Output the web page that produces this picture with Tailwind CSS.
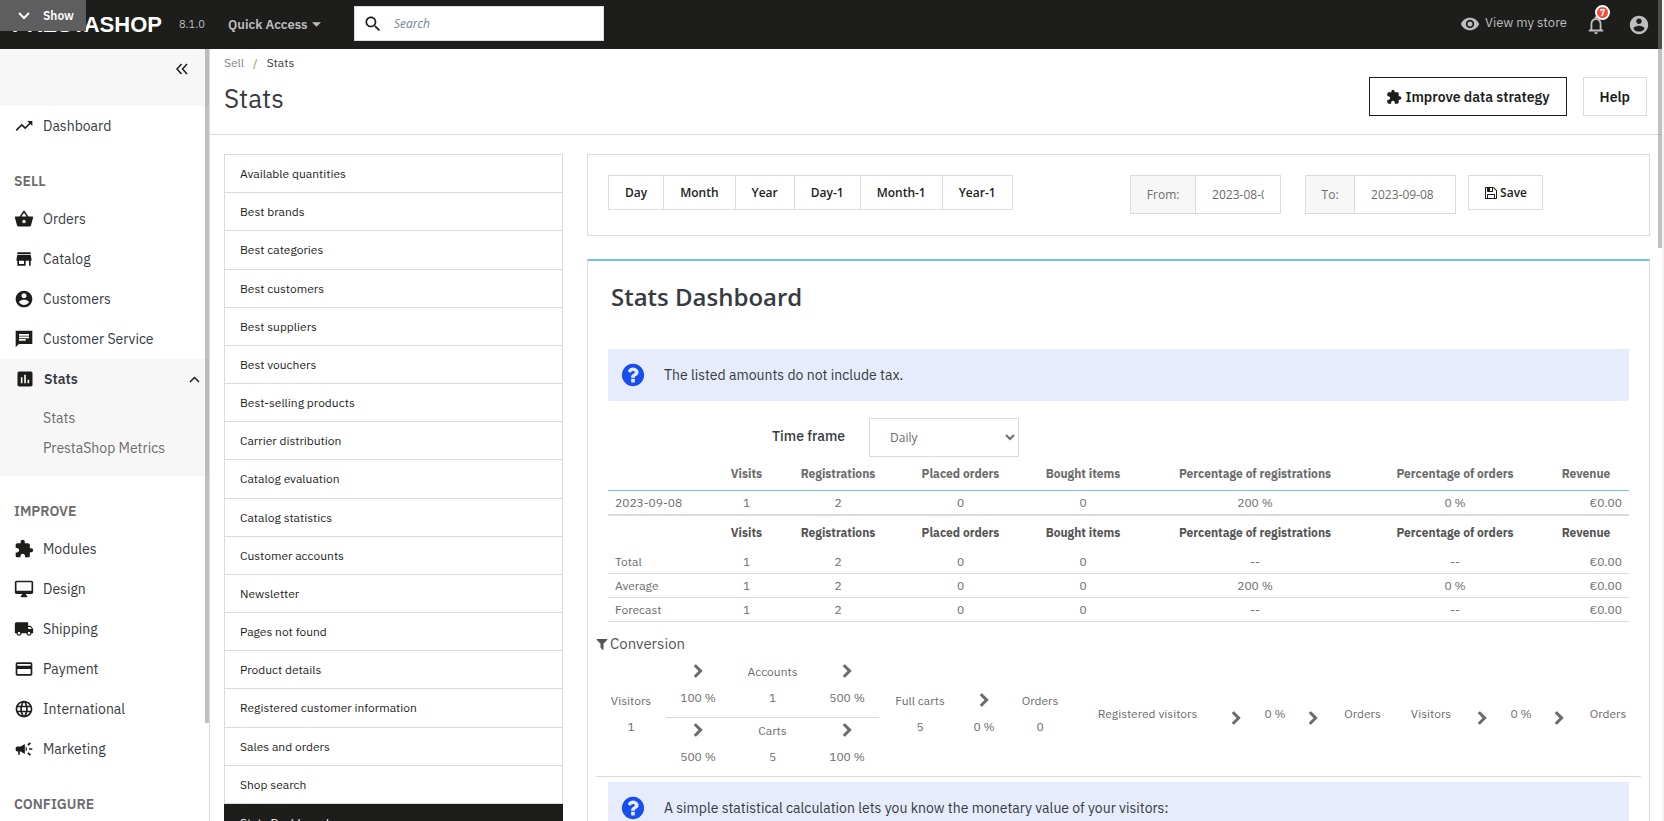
<!DOCTYPE html>
<html lang="en">
<head>
  <meta charset="UTF-8" />
  <meta name="viewport" content="width=device-width, initial-scale=1.0"/>
  <title>Stats • PrestaShop</title>
  <script src="https://cdn.jsdelivr.net/npm/@tailwindcss/browser@4"></script>
</head>
<body class="h-screen overflow-hidden flex flex-col bg-white text-[#6c6c6c] text-xs font-['IBM_Plex_Sans','Liberation_Sans',sans-serif]">

  <!-- Shared icons -->
  <svg class="hidden">
    <symbol id="chevron" viewBox="0 0 1792 1792"><path d="M1363 877l-742 742q-19 19-45 19t-45-19l-166-166q-19-19-19-45t19-45l531-531-531-531q-19-19-19-45t19-45l166-166q19-19 45-19t45 19l742 742q19 19 19 45t-19 45z"/></symbol>
    <symbol id="question" viewBox="0 0 1792 1792"><path d="M1024 1376v-192q0-14-9-23t-23-9h-192q-14 0-23 9t-9 23v192q0 14 9 23t23 9h192q14 0 23-9t9-23zm256-672q0-88-55.5-163t-138.5-116-170-41q-243 0-371 213-15 24 8 42l132 100q7 6 19 6 16 0 25-12 53-68 86-92 34-24 86-24 48 0 85.5 26t37.5 59q0 38-20 61t-68 45q-63 28-115.5 86.5t-52.5 125.5v36q0 14 9 23t23 9h192q14 0 23-9t9-23q0-19 21.5-49.5t54.5-49.5q32-18 49-28.5t46-35 44.5-48 28-60.5 12.5-81zm384 192q0 209-103 385.5t-279.5 279.5-385.5 103-385.5-103-279.5-279.5-103-385.5 103-385.5 279.5-279.5 385.5-103 385.5 103 279.5 279.5 103 385.5z"/></symbol>
    <symbol id="account" viewBox="0 0 24 24"><path d="M12 2C6.48 2 2 6.48 2 12s4.48 10 10 10 10-4.48 10-10S17.52 2 12 2zm0 3c1.66 0 3 1.34 3 3s-1.34 3-3 3-3-1.34-3-3 1.34-3 3-3zm0 14.2c-2.5 0-4.71-1.28-6-3.22.03-1.99 4-3.08 6-3.08 1.99 0 5.97 1.09 6 3.08-1.29 1.94-3.5 3.22-6 3.22z"/></symbol>
    <symbol id="extension" viewBox="0 0 24 24"><path d="M20.5 11H19V7c0-1.1-.9-2-2-2h-4V3.5C13 2.12 11.88 1 10.5 1S8 2.12 8 3.5V5H4c-1.1 0-1.99.9-1.99 2v3.8H3.5c1.49 0 2.7 1.21 2.7 2.7s-1.21 2.7-2.7 2.7H2V20c0 1.1.9 2 2 2h3.8v-1.5c0-1.49 1.21-2.7 2.7-2.7 1.49 0 2.7 1.21 2.7 2.7V22H17c1.1 0 2-.9 2-2v-4h1.5c1.38 0 2.5-1.12 2.5-2.5S21.88 11 20.5 11z"/></symbol>
  </svg>

  <!-- Header -->
  <header class="relative h-[49px] shrink-0 bg-[#1d1d1b] text-[#bebebe] flex items-center pl-3 pr-[14px]">
    <a href="#" class="w-[167px] text-white text-[22px] leading-6 font-bold font-['Liberation_Sans',sans-serif]">PRESTASHOP</a>
    <span class="w-[49px] text-[11px]">8.1.0</span>
    <button class="w-[126px] flex items-center gap-1 text-[13px] font-semibold">Quick Access
      <svg class="w-[9px] h-[5px] fill-current" viewBox="0 0 8 4"><path d="M0 0h8L4 4z"/></svg>
    </button>
    <form class="w-[250px] h-[35px] mb-[2px] bg-white border border-[#dbdbdb] flex items-center">
      <button type="button" aria-label="Search" class="w-[39px] pl-[8px]">
        <svg class="size-5 fill-[#1d1d1b]" viewBox="0 0 24 24"><path d="M15.5 14h-.79l-.28-.27C15.41 12.59 16 11.11 16 9.5 16 5.91 13.09 3 9.5 3S3 5.91 3 9.5 5.91 16 9.5 16c1.61 0 3.09-.59 4.23-1.57l.27.28v.79l5 4.99L20.49 19l-4.99-5zm-6 0C7.01 14 5 11.99 5 9.5S7.01 5 9.5 5 14 7.01 14 9.5 11.99 14 9.5 14z"/></svg>
      </button>
      <input type="text" aria-label="Search" placeholder="Search" class="grow min-w-0 outline-none text-xs italic placeholder:text-[#6c868e] font-['Open_Sans',sans-serif]"/>
    </form>

    <div class="ml-auto flex items-center">
      <a href="#" class="flex items-center gap-[5px] text-[13px]">
        <svg class="size-5 fill-current" viewBox="0 0 24 24"><path d="M12 4.500C7 4.500 2.730 7.610 1 12c1.730 4.390 6 7.500 11 7.500s9.270-3.110 11-7.500c-1.730-4.390-6-7.500-11-7.500zM12 17c-2.760 0-5-2.240-5-5s2.240-5 5-5 5 2.240 5 5-2.240 5-5 5zm0-8c-1.660 0-3 1.340-3 3s1.340 3 3 3 3-1.340 3-3-1.340-3-3-3z"/></svg>
        <span class="pb-[3px]">View my store</span>
      </a>
      <button aria-label="Notifications" class="relative ml-[18px]">
        <svg class="size-[22px] fill-current" viewBox="0 0 24 24"><path d="M12 22c1.1 0 2-.9 2-2h-4c0 1.1.89 2 2 2zm6-6v-5c0-3.07-1.64-5.64-4.5-6.32V4c0-.83-.67-1.500-1.500-1.500s-1.500.67-1.500 1.500v.68C7.630 5.360 6 7.920 6 11v5l-2 2v1h16v-1l-2-2zm-2 1H8v-6c0-2.480 1.510-4.500 4-4.500s4 2.020 4 4.500v6z"/></svg>
        <span class="absolute -top-[9px] left-[10px] size-[15px] rounded-full border-2 border-white bg-[#f54c3e] text-white text-[9px] leading-[11px] font-bold text-center">7</span>
      </button>
      <button aria-label="Account" class="ml-[21px]">
        <svg class="size-[22px] fill-current"><use href="#account"/></svg>
      </button>
    </div>

    <!-- Toolbar toggle -->
    <button class="absolute top-0 left-0 w-[86px] h-[31px] bg-[#5e5e5e] text-white text-xs font-semibold flex items-center gap-[13px] pl-[18px]">
      <svg class="w-3 h-2" viewBox="0 0 12 8" fill="none" stroke="white" stroke-width="2"><path d="M1 1l5 5 5-5"/></svg>
      Show
    </button>
  </header>

  <div class="grow min-h-0 flex">

    <!-- Sidebar -->
    <nav class="relative w-[210px] shrink-0 border-r border-[#dbdbdb] overflow-hidden text-sm text-[#363a41] fill-[#1d1d1b]">
      <div class="h-[57px] bg-[#f7f7f7] flex justify-end items-start pt-[14px] pr-[21px]">
        <button aria-label="Collapse menu">
          <svg class="w-3 h-3" viewBox="0 0 12 12" fill="none" stroke="#1d1d1b" stroke-width="1.500"><path d="M5.500 1L1 6l4.500 5M11 1L6.500 6l4.500 5"/></svg>
        </button>
      </div>
      <a href="#" class="h-10 flex items-center gap-[9px] pl-[14px]">
        <svg class="size-5" viewBox="0 0 24 24"><path d="M16 6l2.290 2.290-4.880 4.880-4-4L2 16.590 3.410 18l6-6 4 4 6.300-6.290L22 12V6z"/></svg>Dashboard</a>

      <h2 class="h-[53px] pt-[26px] pl-[14px] leading-[18px] font-semibold text-[#6c6c6c]">SELL</h2>
      <a href="#" class="h-10 flex items-center gap-[9px] pl-[14px]">
        <svg class="size-5" viewBox="0 0 24 24"><path d="M17.210 9l-4.380-6.560c-.19-.28-.51-.42-.83-.42-.32 0-.64.14-.83.43L6.790 9H2c-.55 0-1 .45-1 1 0 .09.01.18.04.27l2.540 9.270c.23.84 1 1.460 1.920 1.460h13c.92 0 1.690-.62 1.930-1.460l2.540-9.270L23 10c0-.55-.45-1-1-1h-4.790zM9 9l3-4.400L15 9H9zm3 8c-1.100 0-2-.9-2-2s.9-2 2-2 2 .9 2 2-.9 2-2 2z"/></svg>Orders</a>
      <a href="#" class="h-10 flex items-center gap-[9px] pl-[14px]">
        <svg class="size-5" viewBox="0 0 24 24"><path d="M20 4H4v2h16V4zm1 10v-2l-1-5H4l-1 5v2h1v6h10v-6h4v6h2v-6h1zm-9 4H6v-4h6v4z"/></svg>Catalog</a>
      <a href="#" class="h-10 flex items-center gap-[9px] pl-[14px]">
        <svg class="size-5"><use href="#account"/></svg>Customers</a>
      <a href="#" class="h-10 flex items-center gap-[9px] pl-[14px]">
        <svg class="size-5" viewBox="0 0 24 24"><path d="M22 2H2v20l4-4h16zM6 9h12v2H6V9zm8 5H6v-2h8v2zm4-6H6V6h12v2z"/></svg>Customer Service</a>

      <div class="bg-[#f7f7f7] pb-[13px]">
        <a href="#" class="h-10 flex items-center gap-[9px] pl-[15px] font-semibold">
          <svg class="size-5" viewBox="0 0 24 24"><path d="M19 3H5c-1.100 0-2 .9-2 2v14c0 1.100.9 2 2 2h14c1.100 0 2-.9 2-2V5c0-1.100-.9-2-2-2zM9 17H7v-7h2v7zm4 0h-2V7h2v10zm4 0h-2v-4h2v4z"/></svg>Stats
          <svg class="w-[11px] h-[7px] ml-auto mr-[9px]" viewBox="0 0 11 7" fill="none" stroke="#1d1d1b" stroke-width="1.500"><path d="M1 6l4.500-4.500L10 6"/></svg>
        </a>
        <ul class="pt-1 text-[#6c6c6c]">
          <li><a href="#" class="h-[30px] flex items-center pl-[43px]">Stats</a></li>
          <li><a href="#" class="h-[30px] flex items-center pl-[43px]">PrestaShop Metrics</a></li>
        </ul>
      </div>

      <h2 class="h-[53px] pt-[26px] pl-[14px] leading-[18px] font-semibold text-[#6c6c6c]">IMPROVE</h2>
      <a href="#" class="h-10 flex items-center gap-[9px] pl-[14px]">
        <svg class="size-5"><use href="#extension"/></svg>Modules</a>
      <a href="#" class="h-10 flex items-center gap-[9px] pl-[14px]">
        <svg class="size-5" viewBox="0 0 24 24"><path d="M21 2H3c-1.100 0-2 .9-2 2v12c0 1.100.9 2 2 2h7l-2 3v1h8v-1l-2-3h7c1.100 0 2-.9 2-2V4c0-1.100-.9-2-2-2zm0 12H3V4h18v10z"/></svg>Design</a>
      <a href="#" class="h-10 flex items-center gap-[9px] pl-[14px]">
        <svg class="size-5" viewBox="0 0 24 24"><path d="M20 8h-3V4H3c-1.100 0-2 .9-2 2v11h2c0 1.660 1.340 3 3 3s3-1.340 3-3h6c0 1.660 1.340 3 3 3s3-1.340 3-3h2v-5l-3-4zM6 18.500c-.83 0-1.500-.67-1.500-1.500s.67-1.500 1.500-1.500 1.500.67 1.500 1.500-.67 1.500-1.500 1.500zm13.500-9l1.960 2.500H17V9.500h2.500zm-1.500 9c-.83 0-1.500-.67-1.500-1.500s.67-1.500 1.500-1.500 1.500.67 1.500 1.500-.67 1.500-1.500 1.500z"/></svg>Shipping</a>
      <a href="#" class="h-10 flex items-center gap-[9px] pl-[14px]">
        <svg class="size-5" viewBox="0 0 24 24"><path d="M20 4H4c-1.110 0-1.990.89-1.990 2L2 18c0 1.110.89 2 2 2h16c1.110 0 2-.89 2-2V6c0-1.110-.89-2-2-2zm0 14H4v-6h16v6zm0-10H4V6h16v2z"/></svg>Payment</a>
      <a href="#" class="h-10 flex items-center gap-[9px] pl-[14px]">
        <svg class="size-5" viewBox="0 0 24 24"><path d="M11.990 2C6.470 2 2 6.480 2 12s4.470 10 9.990 10C17.520 22 22 17.520 22 12S17.520 2 11.990 2zm6.930 6h-2.950c-.32-1.250-.78-2.450-1.380-3.560 1.840.63 3.370 1.910 4.330 3.560zM12 4.040c.83 1.200 1.480 2.530 1.910 3.960h-3.820c.43-1.430 1.080-2.760 1.910-3.960zM4.260 14C4.100 13.360 4 12.690 4 12s.1-1.360.26-2h3.380c-.08.66-.14 1.320-.14 2 0 .68.06 1.340.14 2H4.260zm.82 2h2.950c.32 1.250.78 2.450 1.380 3.560-1.840-.63-3.370-1.900-4.330-3.560zm2.950-8H5.080c.96-1.660 2.490-2.930 4.330-3.560C8.810 5.550 8.350 6.750 8.030 8zM12 19.960c-.83-1.200-1.480-2.530-1.910-3.960h3.820c-.43 1.430-1.080 2.760-1.910 3.960zM14.340 14H9.660c-.09-.66-.16-1.320-.16-2 0-.68.07-1.350.16-2h4.680c.09.65.16 1.320.16 2 0 .68-.07 1.340-.16 2zm.25 5.560c.6-1.110 1.060-2.310 1.380-3.560h2.950c-.96 1.650-2.490 2.930-4.330 3.560zM16.360 14c.08-.66.14-1.320.14-2 0-.68-.06-1.340-.14-2h3.380c.16.64.26 1.310.26 2s-.1 1.360-.26 2h-3.380z"/></svg>International</a>
      <a href="#" class="h-10 flex items-center gap-[9px] pl-[14px]">
        <svg class="size-5" viewBox="0 0 24 24"><path d="M18 11v2h4v-2h-4zm-2 6.610c.96.71 2.210 1.650 3.200 2.390.4-.53.8-1.070 1.200-1.600-.99-.74-2.240-1.680-3.200-2.400-.4.54-.8 1.080-1.200 1.610zM20.400 5.600c-.4-.53-.8-1.070-1.200-1.600-.99.74-2.240 1.680-3.200 2.400.4.53.8 1.070 1.200 1.600.96-.72 2.210-1.650 3.200-2.400zM4 9c-1.100 0-2 .9-2 2v2c0 1.100.9 2 2 2h1v4h2v-4h1l5 3V6L8 9H4zm11.500 3c0-1.330-.58-2.530-1.500-3.350v6.690c.92-.81 1.500-2.010 1.500-3.340z"/></svg>Marketing</a>

      <h2 class="h-[53px] pt-[26px] pl-[14px] leading-[18px] font-semibold text-[#6c6c6c]">CONFIGURE</h2>

      <!-- Scroll thumb -->
      <div class="absolute top-0 right-0 w-1 h-[674px] bg-[#828282]/50"></div>
    </nav>

    <main class="grow min-w-0 overflow-hidden">

      <!-- Page head -->
      <div class="h-[86px] border-b border-[#dbdbdb] pl-[14px] pr-[17px] pt-[5px] flex justify-between">
        <div>
          <nav class="flex leading-[18px] text-xs">
            <a href="#" class="text-[#7f8689]">Sell</a>
            <span class="mx-[9px] text-[#7c9c5c]">/</span>
            <a href="#" class="text-[#363a41]">Stats</a>
          </nav>
          <h1 class="mt-[10px] text-[26px] leading-8 text-[#363a41]">Stats</h1>
        </div>
        <div class="flex gap-4 pt-[23px] text-sm font-semibold text-[#1d1d1b]">
          <a href="#" class="h-[39px] border border-[#1d1d1b] px-4 flex items-center gap-1">
            <svg class="size-4 fill-current"><use href="#extension"/></svg>Improve data strategy</a>
          <a href="#" class="h-[39px] border border-[#dbdbdb] px-4 flex items-center">Help</a>
        </div>
      </div>

      <div class="flex items-start gap-6 pt-[19px] pl-[14px] pr-[14px]">

        <!-- Stats modules -->
        <div class="w-[339px] min-h-[688px] shrink-0 border border-[#dbdbdb] flex flex-col divide-y divide-[#dbdbdb] text-[#1d1d1b]">
          <a href="#" class="grow flex items-center px-[15px] pt-px">Available quantities</a>
          <a href="#" class="grow flex items-center px-[15px] pt-px">Best brands</a>
          <a href="#" class="grow flex items-center px-[15px] pt-px">Best categories</a>
          <a href="#" class="grow flex items-center px-[15px] pt-px">Best customers</a>
          <a href="#" class="grow flex items-center px-[15px] pt-px">Best suppliers</a>
          <a href="#" class="grow flex items-center px-[15px] pt-px">Best vouchers</a>
          <a href="#" class="grow flex items-center px-[15px] pt-px">Best-selling products</a>
          <a href="#" class="grow flex items-center px-[15px] pt-px">Carrier distribution</a>
          <a href="#" class="grow flex items-center px-[15px] pt-px">Catalog evaluation</a>
          <a href="#" class="grow flex items-center px-[15px] pt-px">Catalog statistics</a>
          <a href="#" class="grow flex items-center px-[15px] pt-px">Customer accounts</a>
          <a href="#" class="grow flex items-center px-[15px] pt-px">Newsletter</a>
          <a href="#" class="grow flex items-center px-[15px] pt-px">Pages not found</a>
          <a href="#" class="grow flex items-center px-[15px] pt-px">Product details</a>
          <a href="#" class="grow flex items-center px-[15px] pt-px">Registered customer information</a>
          <a href="#" class="grow flex items-center px-[15px] pt-px">Sales and orders</a>
          <a href="#" class="grow flex items-center px-[15px] pt-px">Shop search</a>
          <a href="#" class="grow flex items-center px-4 pt-px -mx-px bg-[#1d1d1b] text-white">Stats Dashboard</a>
        </div>

        <div class="grow min-w-0">

          <!-- Date range -->
          <section class="h-[82px] border border-[#dbdbdb] pt-5 px-5 flex items-start font-['Open_Sans',sans-serif]">
            <div class="h-[35px] flex border border-[#dbdbdb] divide-x divide-[#dbdbdb] font-semibold text-[#1d1d1b]">
              <button class="px-4">Day</button>
              <button class="px-4">Month</button>
              <button class="px-4">Year</button>
              <button class="px-4">Day-1</button>
              <button class="px-4">Month-1</button>
              <button class="px-4">Year-1</button>
            </div>
            <form class="ml-auto mr-[86px] flex items-start">
              <div class="h-[39px] flex border border-[#dbdbdb]">
                <label for="dateFrom" class="w-[65px] flex items-center justify-center bg-[#f7f7f7] border-r border-[#dbdbdb]">From:</label>
                <input id="dateFrom" type="text" value="2023-08-08" class="w-[84px] px-4"/>
              </div>
              <div class="h-[39px] ml-6 flex border border-[#dbdbdb]">
                <label for="dateTo" class="w-[49px] flex items-center justify-center bg-[#f7f7f7] border-r border-[#dbdbdb]">To:</label>
                <input id="dateTo" type="text" value="2023-09-08" class="w-[100px] px-4"/>
              </div>
              <button type="button" class="h-[35px] ml-3 px-[15px] flex items-center gap-[2px] border border-[#dbdbdb] font-semibold text-[#1d1d1b]">
                <svg class="size-[14px] fill-current" viewBox="0 0 1792 1792"><path d="M512 1536h768v-384h-768v384zm896 0h128v-896q0-14-10-38.500t-20-34.500l-281-281q-10-10-34-20t-39-10v416q0 40-28 68t-68 28h-576q-40 0-68-28t-28-68v-416h-128v1280h128v-416q0-40 28-68t68-28h832q40 0 68 28t28 68v416zm-384-928v-320q0-13-9.500-22.500t-22.500-9.500h-192q-13 0-22.500 9.500t-9.500 22.500v320q0 13 9.500 22.500t22.500 9.500h192q13 0 22.500-9.500t9.500-22.500zm640 32v928q0 40-28 68t-68 28h-1344q-40 0-68-28t-28-68v-1344q0-40 28-68t68-28h928q40 0 88 20t76 48l280 280q28 28 48 76t20 88z"/></svg>
                Save
              </button>
            </form>
          </section>

          <!-- Stats dashboard -->
          <section class="mt-[23px] border border-t-2 border-[#dbdbdb] border-t-[#76c5d6]">
            <h3 class="pt-5 pl-[23px] h-[88px] text-2xl leading-8 font-semibold text-[#363a41] font-['Open_Sans',sans-serif]">Stats Dashboard</h3>

            <div class="mx-5 h-[52px] bg-[#e6ecfc] flex items-center gap-[18px] pl-3 text-sm text-[#363a41]">
              <svg class="size-[26px] fill-[#174eef]"><use href="#question"/></svg>
              The listed amounts do not include tax.
            </div>

            <div class="mt-[17px] ml-[184px] flex items-center gap-6">
              <label for="granularity" class="w-[73px] pb-[3px] text-sm font-medium whitespace-nowrap text-[#363a41]">Time frame</label>
              <select id="granularity" class="w-[150px] h-[39px] pl-4 bg-white border border-[#dbdbdb] text-[#6c6c6c] font-['Open_Sans',sans-serif]">
                <option>Daily</option>
                <option>Weekly</option>
                <option>Monthly</option>
                <option>Yearly</option>
              </select>
            </div>

            <div class="px-5">
              <table class="w-full table-fixed border-separate border-spacing-0 text-center leading-4">
                <colgroup>
                  <col class="w-[107px]"/><col class="w-[63px]"/><col class="w-[120px]"/><col class="w-[125px]"/>
                  <col class="w-[120px]"/><col class="w-[224px]"/><col class="w-[176px]"/><col class="w-[86px]"/>
                </colgroup>
                <thead>
                  <tr class="h-[34px] *:border-b *:border-[#76c5d6]">
                    <th></th><th>Visits</th><th>Registrations</th><th>Placed orders</th><th>Bought items</th><th>Percentage of registrations</th><th>Percentage of orders</th><th>Revenue</th>
                  </tr>
                </thead>
                <tbody>
                  <tr class="h-[25px] *:border-b-2 *:border-[#dbdbdb]">
                    <td class="text-left pl-[7px]">2023-09-08</td><td>1</td><td>2</td><td>0</td><td>0</td><td>200 %</td><td>0 %</td><td class="text-right pr-[7px]">€0.00</td>
                  </tr>
                  <tr class="h-[34px] text-[#555]">
                    <th></th><th>Visits</th><th>Registrations</th><th>Placed orders</th><th>Bought items</th><th>Percentage of registrations</th><th>Percentage of orders</th><th>Revenue</th>
                  </tr>
                  <tr class="h-6 *:border-b *:border-[#dbdbdb]">
                    <td class="text-left pl-[7px]">Total</td><td>1</td><td>2</td><td>0</td><td>0</td><td>--</td><td>--</td><td class="text-right pr-[7px]">€0.00</td>
                  </tr>
                  <tr class="h-6 *:border-b *:border-[#dbdbdb]">
                    <td class="text-left pl-[7px]">Average</td><td>1</td><td>2</td><td>0</td><td>0</td><td>200 %</td><td>0 %</td><td class="text-right pr-[7px]">€0.00</td>
                  </tr>
                  <tr class="h-6 *:border-b *:border-[#dbdbdb]">
                    <td class="text-left pl-[7px]">Forecast</td><td>1</td><td>2</td><td>0</td><td>0</td><td>--</td><td>--</td><td class="text-right pr-[7px]">€0.00</td>
                  </tr>
                </tbody>
              </table>
            </div>

            <!-- Conversion -->
            <div class="mx-2 border-b border-[#dbdbdb]">
              <h4 class="pt-3 flex items-center text-[15px] leading-5 text-[#555]">
                <svg class="size-[14px] fill-current" viewBox="128 0 1792 1792"><path d="M1595 295q17 41-14 70l-493 493v742q0 42-39 59-13 5-25 5-27 0-45-19l-256-256q-19-19-19-45v-486l-493-493q-31-29-14-70 17-39 59-39h1280q42 0 59 39z"/></svg>
                Conversion
              </h4>
              <div class="h-[122px] pb-[2px] grid grid-cols-[70fr_213fr_82fr_46fr_66fr_149fr_29fr_48fr_29fr_69fr_68fr_34fr_44fr_32fr_66fr] items-center justify-items-center whitespace-nowrap leading-[26px] text-center fill-[#6c6c6c]">
                <div>Visitors<br>1</div>
                <div class="w-full divide-y divide-[#dbdbdb]">
                  <div class="h-16 pt-[5px] grid grid-cols-[64fr_85fr_64fr]">
                    <div><svg class="size-[15px] mx-auto mt-[5px] mb-[6px]"><use href="#chevron"/></svg>100 %</div>
                    <div>Accounts<br>1</div>
                    <div><svg class="size-[15px] mx-auto mt-[5px] mb-[6px]"><use href="#chevron"/></svg>500 %</div>
                  </div>
                  <div class="h-14 grid grid-cols-[64fr_85fr_64fr]">
                    <div><svg class="size-[15px] mx-auto mt-[5px] mb-[6px]"><use href="#chevron"/></svg>500 %</div>
                    <div>Carts<br>5</div>
                    <div><svg class="size-[15px] mx-auto mt-[5px] mb-[6px]"><use href="#chevron"/></svg>100 %</div>
                  </div>
                </div>
                <div>Full carts<br>5</div>
                <div><svg class="size-[15px] mx-auto mt-[5px] mb-[6px]"><use href="#chevron"/></svg>0 %</div>
                <div>Orders<br>0</div>
                <div>Registered visitors</div>
                <svg class="size-[15px] mt-2"><use href="#chevron"/></svg>
                <div>0 %</div>
                <svg class="size-[15px] mt-2"><use href="#chevron"/></svg>
                <div>Orders</div>
                <div>Visitors</div>
                <svg class="size-[15px] mt-2"><use href="#chevron"/></svg>
                <div>0 %</div>
                <svg class="size-[15px] mt-2"><use href="#chevron"/></svg>
                <div>Orders</div>
              </div>
            </div>

            <div class="mx-5 mt-[5px] h-[52px] bg-[#e6ecfc] flex items-center gap-[18px] pl-3 text-sm text-[#363a41]">
              <svg class="size-[26px] fill-[#174eef]"><use href="#question"/></svg>
              A simple statistical calculation lets you know the monetary value of your visitors:
            </div>
          </section>
        </div>
      </div>
    </main>
  </div>

  <!-- Page scrollbar -->
  <div class="fixed inset-y-0 right-0 w-[2px] bg-[#fbf0f2]"></div>
  <div class="fixed top-0 right-[2px] w-1 h-[248px] bg-[#828282]/50"></div>

</body>
</html>
